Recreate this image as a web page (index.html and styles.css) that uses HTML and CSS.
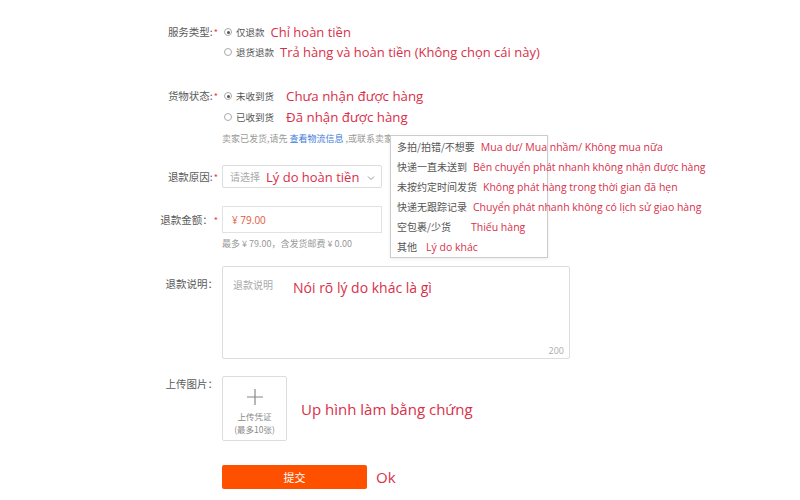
FILE: index.html
```html
<!DOCTYPE html>
<html lang="zh">
<head>
<meta charset="utf-8">
<title>退款申请</title>
<link rel="stylesheet" href="styles.css">
</head>
<body>
<div class="form">
  <div class="row r1">
    <div class="label">服务类型:<i>*</i></div>
    <div class="field">
      <div class="opt"><span class="radio on"></span><span class="cn">仅退款</span><span class="vi vi-a">Chỉ hoàn tiền</span></div>
      <div class="opt"><span class="radio"></span><span class="cn">退货退款</span><span class="vi vi-a">Trả hàng và hoàn tiền (Không chọn cái này)</span></div>
    </div>
  </div>

  <div class="row r2">
    <div class="label">货物状态:<i>*</i></div>
    <div class="field">
      <div class="opt"><span class="radio on"></span><span class="cn">未收到货</span><span class="vi vi-c">Chưa nhận được hàng</span></div>
      <div class="opt"><span class="radio"></span><span class="cn">已收到货</span><span class="vi vi-c">Đã nhận được hàng</span></div>
      <div class="note">卖家已发货,请先 <span class="link">查看物流信息</span> ,或联系卖家
        <div class="dropdown">
          <div class="dd-row"><span class="cn">多拍/拍错/不想要</span><span class="vi-s">Mua dư/ Mua nhầm/ Không mua nữa</span></div>
          <div class="dd-row"><span class="cn">快递一直未送到</span><span class="vi-s">Bên chuyển phát nhanh không nhận được hàng</span></div>
          <div class="dd-row"><span class="cn">未按约定时间发货</span><span class="vi-s">Không phát hàng trong thời gian đã hẹn</span></div>
          <div class="dd-row"><span class="cn">快递无跟踪记录</span><span class="vi-s">Chuyển phát nhanh không có lịch sử giao hàng</span></div>
          <div class="dd-row"><span class="cn">空包裹/少货</span><span class="vi-s wide">Thiếu hàng</span></div>
          <div class="dd-row"><span class="cn">其他</span><span class="vi-s mid">Lý do khác</span></div>
        </div>
      </div>
    </div>
  </div>

  <div class="row r3">
    <div class="label mid-label">退款原因:<i>*</i></div>
    <div class="field">
      <div class="select"><span class="ph">请选择</span><span class="vi vi-a">Lý do hoàn tiền</span>
        <svg class="chev" width="8" height="6" viewBox="0 0 8 6"><path d="M1 1.5 L4 4.5 L7 1.5" fill="none" stroke="#999" stroke-width="1"/></svg>
      </div>
    </div>
  </div>

  <div class="row r4">
    <div class="label mid-label2">退款金额：<i>*</i></div>
    <div class="field">
      <div class="input"><span class="price">¥ 79.00</span></div>
      <div class="hint">最多 ¥ 79.00，含发货邮费 ¥ 0.00</div>
    </div>
  </div>

  <div class="row r5">
    <div class="label top-label">退款说明：</div>
    <div class="field">
      <div class="textarea"><span class="ph">退款说明</span><span class="vi vi-b ta-text">Nói rõ lý do khác là gì</span><span class="count">200</span></div>
    </div>
  </div>

  <div class="row r6">
    <div class="label up-label">上传图片：</div>
    <div class="field up-field">
      <div class="upload">
        <svg width="18" height="18" viewBox="0 0 18 18"><path d="M9 1 V17 M1 9 H17" stroke="#888" stroke-width="1.2" fill="none"/></svg>
        <span class="up-t">上传凭证</span>
        <span class="up-t">(最多10张)</span>
      </div>
      <span class="vi vi-b">Up hình làm bằng chứng</span>
    </div>
  </div>

  <div class="row r7">
    <div class="label"></div>
    <div class="field btn-field">
      <div class="btn">提交</div>
      <span class="vi vi-b">Ok</span>
    </div>
  </div>
</div>
</body>
</html>
```

FILE: styles.css
```css
* { box-sizing: border-box; }
html, body { margin: 0; padding: 0; background: #fff; }
body {
  width: 800px;
  height: 500px;
  overflow: hidden;
  font-family: "Noto Sans CJK SC", "Open Sans", sans-serif;
  color: #555;
}
.form {
  padding: 22px 0 0 148px;
}
.row {
  display: flex;
  align-items: flex-start;
}
.label {
  width: 70px;
  text-align: right;
  font-size: 10.5px;
  line-height: 20px;
  color: #5a5a5a;
  white-space: nowrap;
  flex-shrink: 0;
}
.label i {
  font-style: normal;
  color: #e4393c;
  font-size: 9px;
  margin-left: 1px;
}
.field {
  margin-left: 4px;
  display: flex;
  flex-direction: column;
}
.opt {
  display: flex;
  align-items: center;
  height: 20px;
  white-space: nowrap;
}
.radio {
  width: 8px;
  height: 8px;
  border: 1px solid #aaa;
  border-radius: 50%;
  margin: 0 4px 0 2px;
  position: relative;
  background: #fff;
}
.radio.on::after {
  content: "";
  position: absolute;
  left: 1.5px;
  top: 1.5px;
  width: 3px;
  height: 3px;
  border-radius: 50%;
  background: #555;
}
.cn {
  font-size: 9.5px;
  color: #555;
}
.vi {
  font-family: "Open Sans", "Noto Sans", sans-serif;
  color: #d9304a;
  white-space: nowrap;
}
.vi-a { font-size: 13px; margin-left: 6px; }
.vi-b { font-size: 14px; margin-left: 14px; }
.vi-c { font-size: 13.3px; margin-left: 12px; }
.r2 { margin-top: 24px; }
.r2 .opt + .opt { margin-top: 1px; }
.note {
  position: relative;
  margin-top: 3px;
  height: 18px;
  line-height: 18px;
  font-size: 9px;
  color: #999;
  white-space: nowrap;
}
.link { color: #3d7bd6; }
.dropdown {
  position: absolute;
  left: 168px;
  top: 5px;
  width: 158px;
  height: 123px;
  padding-top: 1px;
  background: #fff;
  border: 1px solid #ccc;
  box-shadow: 0 1px 3px rgba(0,0,0,0.08);
  z-index: 2;
}
.dd-row {
  height: 20px;
  display: flex;
  align-items: center;
  padding-left: 6px;
  white-space: nowrap;
}
.dd-row .cn { font-size: 10px; color: #555; }
.vi-s {
  font-family: "Open Sans", "Noto Sans", sans-serif;
  font-size: 10.5px;
  color: #d9304a;
  margin-left: 6px;
}
.vi-s.wide { margin-left: 20px; }
.vi-s.mid { margin-left: 9px; }
.r3 { margin-top: 17px; }
.mid-label { line-height: 23px; }
.select {
  width: 160px;
  height: 23px;
  border: 1px solid #ddd;
  border-radius: 2px;
  display: flex;
  align-items: center;
  padding-left: 7px;
  position: relative;
}
.ph {
  font-size: 10px;
  color: #aaa;
}
.select .vi-a { margin-left: 6px; font-size: 13px; }
.chev { position: absolute; right: 6px; top: 9px; }
.r4 { margin-top: 17px; }
.mid-label2 { line-height: 27px; }
.input {
  width: 160px;
  height: 27px;
  border: 1px solid #e2e2e2;
  display: flex;
  align-items: center;
  padding-left: 9px;
}
.price {
  font-family: "Open Sans", sans-serif;
  font-size: 10px;
  color: #e4583a;
}
.hint {
  margin-top: 4px;
  font-size: 9px;
  line-height: 14px;
  color: #999;
  white-space: nowrap;
}
.r5 { margin-top: 15px; }
.top-label { padding-top: 8px; }
.textarea {
  position: relative;
  width: 348px;
  height: 93px;
  border: 1px solid #ddd;
  border-radius: 2px;
  display: flex;
  align-items: flex-start;
  padding: 10px 0 0 10px;
}
.textarea .ph { line-height: 16px; }
.ta-text { margin-left: 20px; line-height: 24px; margin-top: -1px; }
.count {
  position: absolute;
  right: 5px;
  bottom: 1px;
  font-family: "Open Sans", sans-serif;
  font-size: 9px;
  color: #aaa;
}
.r6 { margin-top: 17px; }
.up-label { padding-top: 0; line-height: 15px; }
.up-field { flex-direction: row; align-items: center; }
.upload {
  width: 65px;
  height: 65px;
  border: 1px solid #ddd;
  border-radius: 2px;
  display: flex;
  flex-direction: column;
  align-items: center;
  padding-top: 11px;
}
.upload svg { margin-bottom: 4px; }
.up-t {
  font-size: 8.5px;
  line-height: 13px;
  color: #888;
}
.up-field .vi-b { font-size: 15px; }
.r7 { margin-top: 24px; }
.btn-field { flex-direction: row; align-items: center; }
.btn {
  width: 145px;
  height: 24px;
  background: #ff5000;
  border-radius: 2px;
  color: #fff;
  font-size: 11px;
  display: flex;
  align-items: center;
  justify-content: center;
}
.btn-field .vi-b { margin-left: 9px; font-size: 15px; }
```
